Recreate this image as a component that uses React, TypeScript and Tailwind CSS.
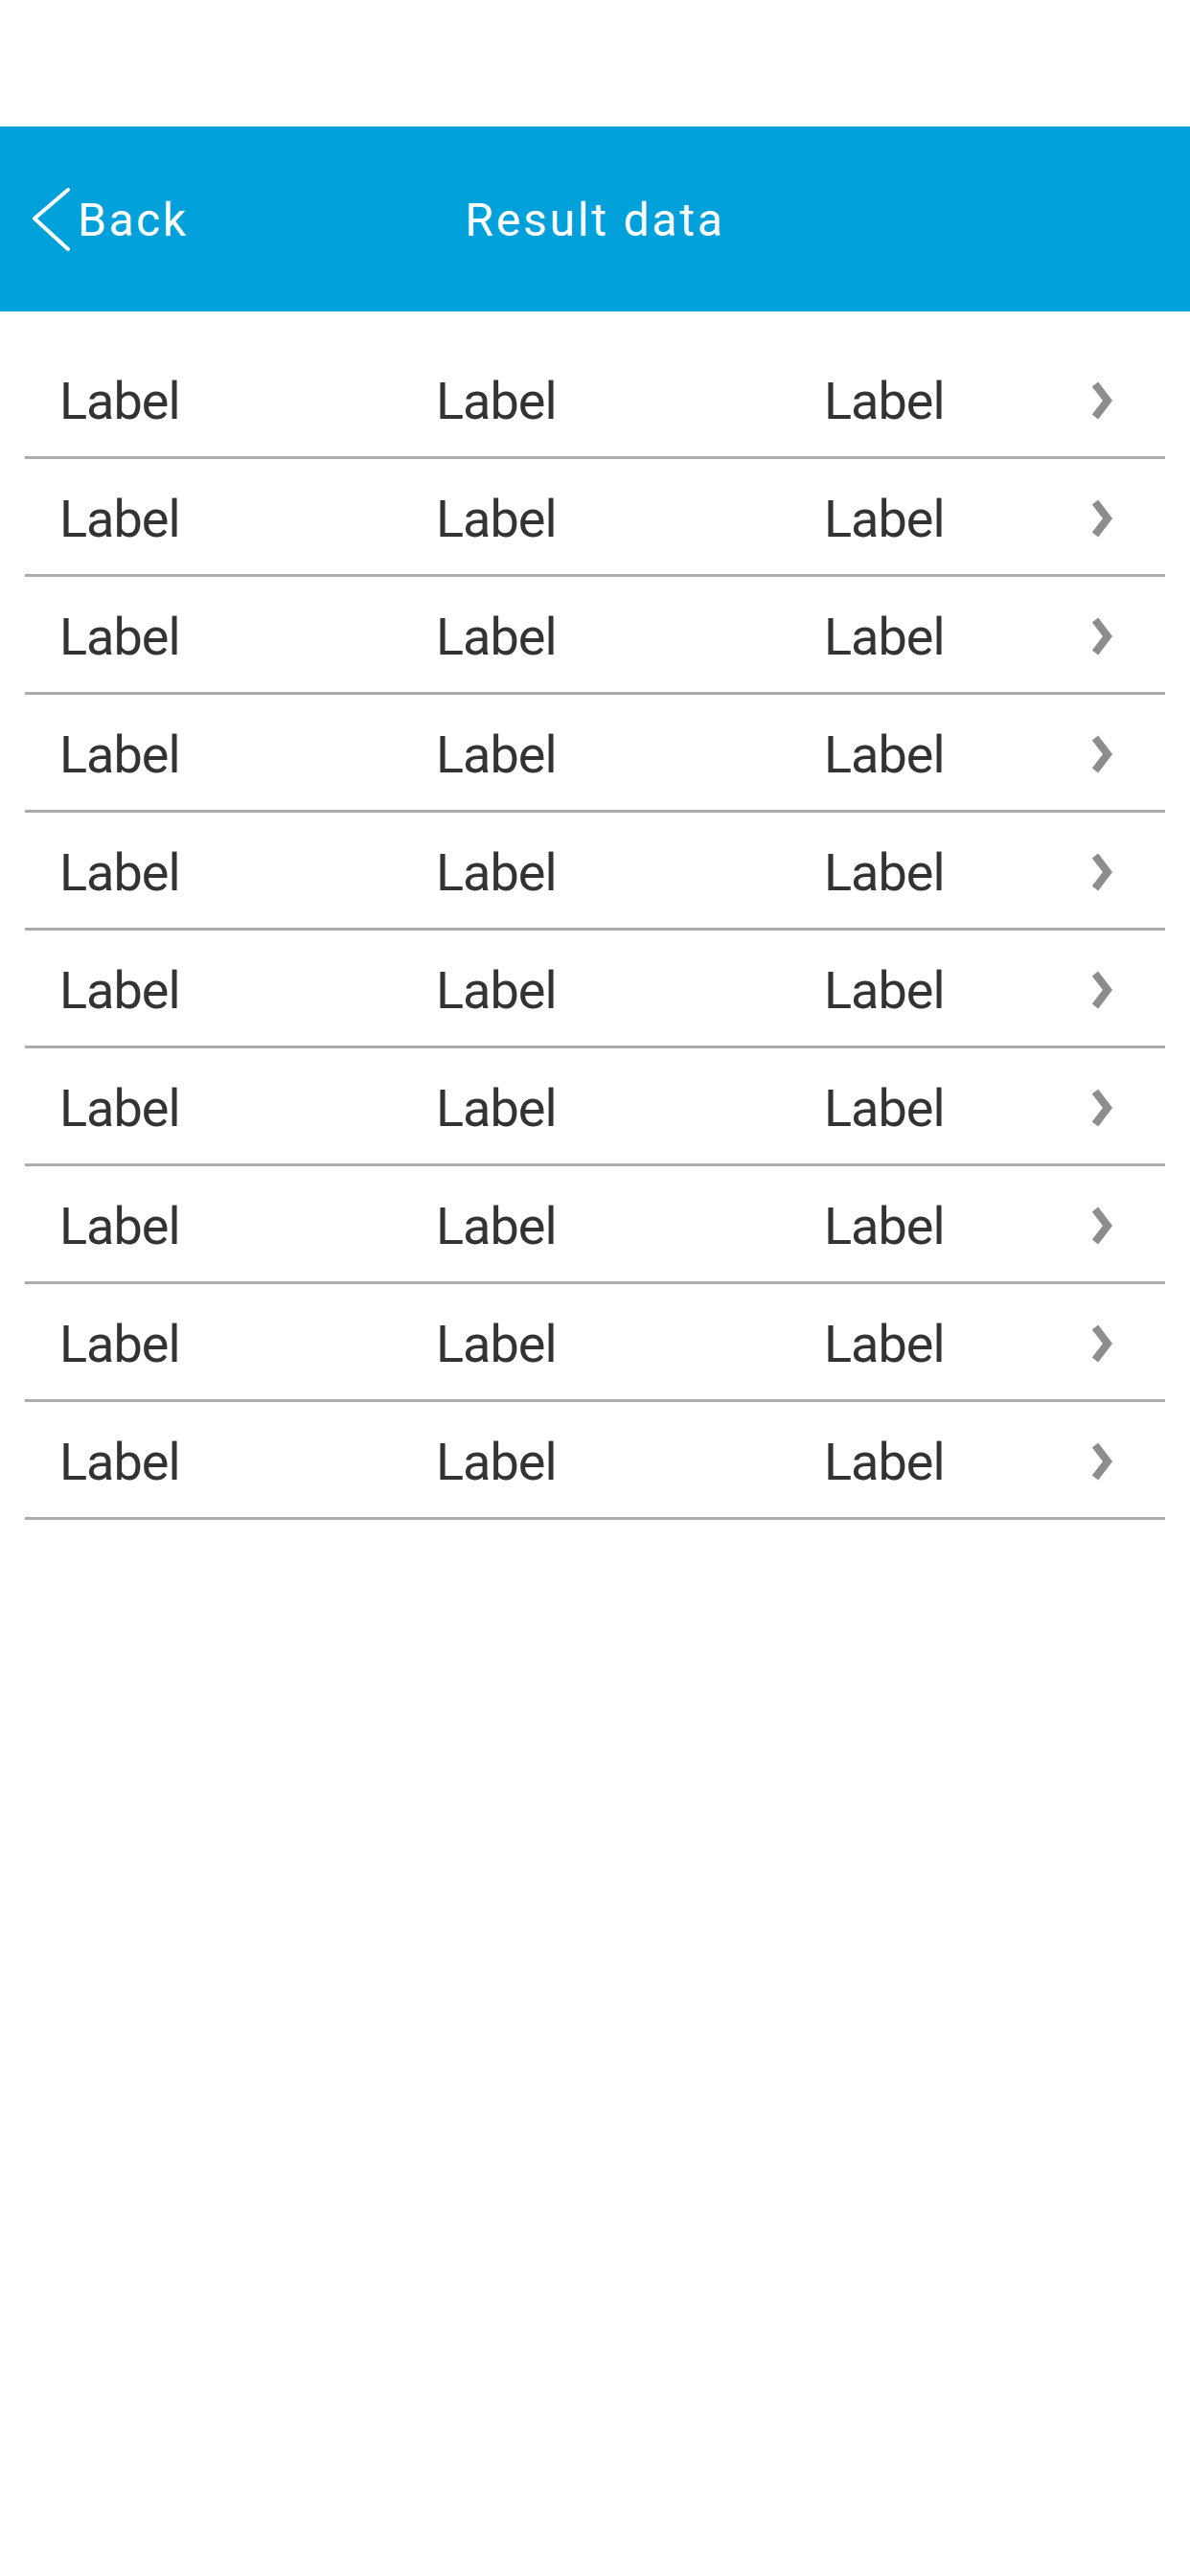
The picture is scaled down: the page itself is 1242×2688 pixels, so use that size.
import React from "react";

const rows = Array.from({ length: 10 }, (_, i) => i);

function RowChevron() {
  return (
    <svg width="24" height="42" viewBox="0 0 24 42" className="block">
      <polyline
        points="5,4 18,21 5,38"
        fill="none"
        stroke="#8d8d8d"
        strokeWidth="8"
        strokeLinecap="butt"
        strokeLinejoin="miter"
      />
    </svg>
  );
}

export default function App() {
  return (
    <div
      className="w-[1242px] h-[2688px] bg-white"
      style={{ fontFamily: "Roboto, 'Liberation Sans', sans-serif" }}
    >
      <div className="h-[132px] bg-white" />
      <header className="h-[193px] bg-[#00a0db] grid grid-cols-[1fr_auto_1fr] items-center text-white">
        <div className="flex items-center pl-[33px]">
          <svg width="42" height="70" viewBox="0 0 42 70" className="block">
            <polyline
              points="38,4 3,34 38,66"
              fill="none"
              stroke="#ffffff"
              strokeWidth="4"
              strokeLinecap="round"
              strokeLinejoin="round"
            />
          </svg>
          <span className="text-[48px] leading-none tracking-[2.5px] ml-[6px] pt-[2px]">Back</span>
        </div>
        <div className="text-[48px] leading-none tracking-[2.8px] pt-[2px]">Result data</div>
        <div />
      </header>
      <div className="px-[26px] pt-[31px]">
        {rows.map((r) => (
          <div
            key={r}
            className="h-[123px] border-b-[3px] border-[#ababab] flex items-center pl-[36px] pr-[54px] pt-[4px] text-[#333333] text-[54px] tracking-[-1px]"
          >
            <span className="w-[393px]">Label</span>
            <span className="w-[405px]">Label</span>
            <span className="flex-1">Label</span>
            <RowChevron />
          </div>
        ))}
      </div>
    </div>
  );
}
